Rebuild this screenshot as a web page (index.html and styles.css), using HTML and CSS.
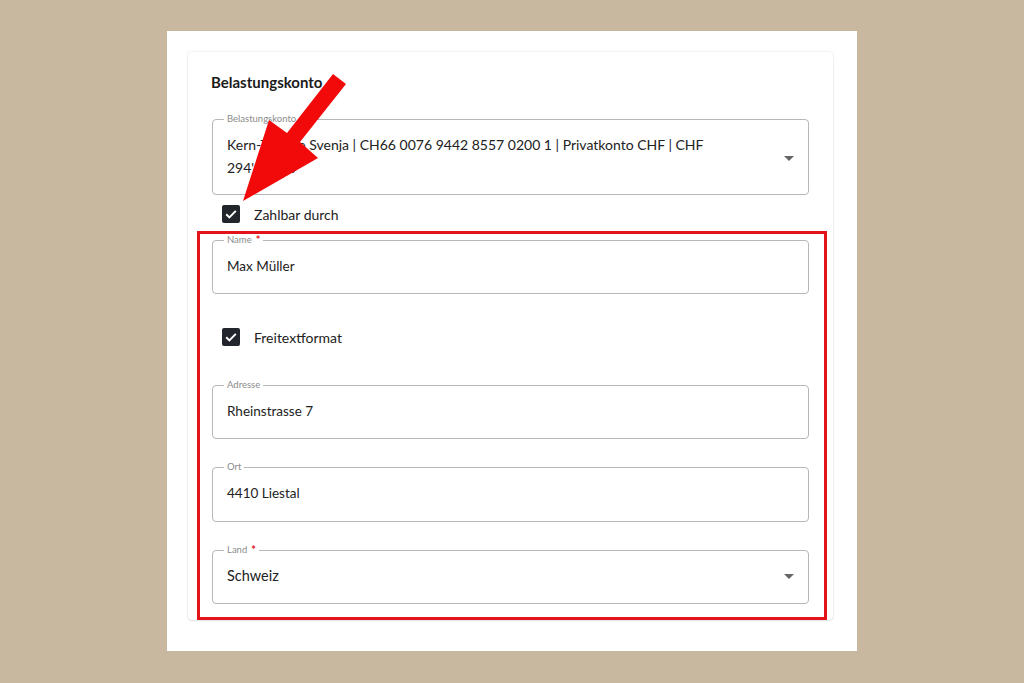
FILE: index.html
```html
<!DOCTYPE html>
<html lang="de">
<head>
<meta charset="utf-8">
<title>Belastungskonto</title>
<link rel="stylesheet" href="styles.css">
</head>
<body>
<div class="panel">
  <div class="card">
    <h2 class="title">Belastungskonto</h2>

    <fieldset class="field field-select">
      <legend>Belastungskonto</legend>
      <div class="select-row">
        <div class="value multi">Kern-Treuble Svenja | CH66 0076 9442 8557 0200 1 | Privatkonto CHF | CHF 294'518.09</div>
        <span class="caret"></span>
      </div>
    </fieldset>

    <label class="check-row check-first">
      <span class="box"><svg viewBox="0 0 18 18" width="18" height="18"><path d="M4.2 9.3 L7.4 12.4 L13.8 5.9" fill="none" stroke="#fff" stroke-width="2"/></svg></span>
      <span class="check-label">Zahlbar durch</span>
    </label>

    <fieldset class="field">
      <legend>Name<span class="req">*</span></legend>
      <div class="value">Max Müller</div>
    </fieldset>

    <label class="check-row check-second">
      <span class="box"><svg viewBox="0 0 18 18" width="18" height="18"><path d="M4.2 9.3 L7.4 12.4 L13.8 5.9" fill="none" stroke="#fff" stroke-width="2"/></svg></span>
      <span class="check-label">Freitextformat</span>
    </label>

    <fieldset class="field">
      <legend>Adresse</legend>
      <div class="value">Rheinstrasse 7</div>
    </fieldset>

    <fieldset class="field field-gap field-tall">
      <legend>Ort</legend>
      <div class="value">4410 Liestal</div>
    </fieldset>

    <fieldset class="field field-gap">
      <legend>Land<span class="req">*</span></legend>
      <div class="select-row">
        <div class="value big">Schweiz</div>
        <span class="caret"></span>
      </div>
    </fieldset>

    <div class="highlight"></div>
  </div>
</div>

<svg class="arrow" viewBox="0 0 1024 683" width="1024" height="683">
  <polygon points="333,74 346,84 300,142 318,158 243,201 269,120 287,133" fill="#f20a0a"/>
</svg>
</body>
</html>
```

FILE: styles.css
```css
html, body {
  margin: 0;
  padding: 0;
}

body {
  background: #c9b8a0;
  width: 1024px;
  height: 683px;
  position: relative;
  overflow: hidden;
  font-family: "Lato", "Liberation Sans", sans-serif;
  color: #222;
}

.panel {
  width: 690px;
  height: 620px;
  margin: 31px auto 0;
  background: #fff;
  box-sizing: border-box;
  padding: 21px 24px 31px 21px;
}

.card {
  position: relative;
  height: 568px;
  box-sizing: border-box;
  background: #fff;
  border-radius: 4px;
  box-shadow: 0 0 2px rgba(0, 0, 0, 0.16), 0 1px 2px rgba(0, 0, 0, 0.08);
  padding: 20px 24px 17px 24px;
}

.title {
  margin: 0 0 21px -1px;
  font-size: 15px;
  line-height: 20px;
  font-weight: 700;
  color: #1b1b1b;
}

.field {
  margin: 0;
  padding: 0 14px;
  border: 1px solid #b7b7b7;
  border-radius: 4px;
  min-width: 0;
}

.field legend {
  margin-left: -3px;
  padding: 0 3px;
  font-size: 9.5px;
  line-height: 12px;
  height: 12px;
  color: #8c8c8c;
}

.req {
  color: #e0141e;
  font-size: 11px;
  line-height: 12px;
  font-weight: 700;
  margin-left: 4px;
  vertical-align: top;
}

.value {
  font-size: 13.5px;
  line-height: 20px;
  padding: 10px 0 17px;
  color: #222;
}

.field-tall .value {
  padding-bottom: 18px;
}

.value.big {
  flex: 1;
  font-size: 14.5px;
}

.value.multi {
  flex: 1;
  font-size: 14px;
  line-height: 23px;
  padding: 8px 30px 15px 0;
}

.select-row {
  display: flex;
  align-items: center;
}

.caret {
  width: 0;
  height: 0;
  border-left: 5px solid transparent;
  border-right: 5px solid transparent;
  border-top: 5px solid #666;
  flex: none;
}

.field-select .caret {
  margin-top: -3px;
}

.select-row .big + .caret {
  margin-top: -6px;
}

.check-row {
  display: flex;
  align-items: center;
  margin-left: 10px;
  height: 18px;
}

.check-first {
  margin-top: 10px;
  margin-bottom: 11px;
}

.check-second {
  margin-top: 34px;
  margin-bottom: 33px;
}

.box {
  width: 18px;
  height: 18px;
  border-radius: 2px;
  background: #22252b;
  display: block;
  flex: none;
}

.box svg {
  display: block;
}

.check-label {
  margin-left: 14px;
  font-size: 14px;
  color: #222;
}

.field-gap {
  margin-top: 22px;
}

.highlight {
  position: absolute;
  left: 9px;
  top: 179px;
  width: 630px;
  height: 389px;
  box-sizing: border-box;
  border: 3px solid #e3131b;
  pointer-events: none;
}

.arrow {
  position: absolute;
  left: 0;
  top: 0;
  pointer-events: none;
}
```
